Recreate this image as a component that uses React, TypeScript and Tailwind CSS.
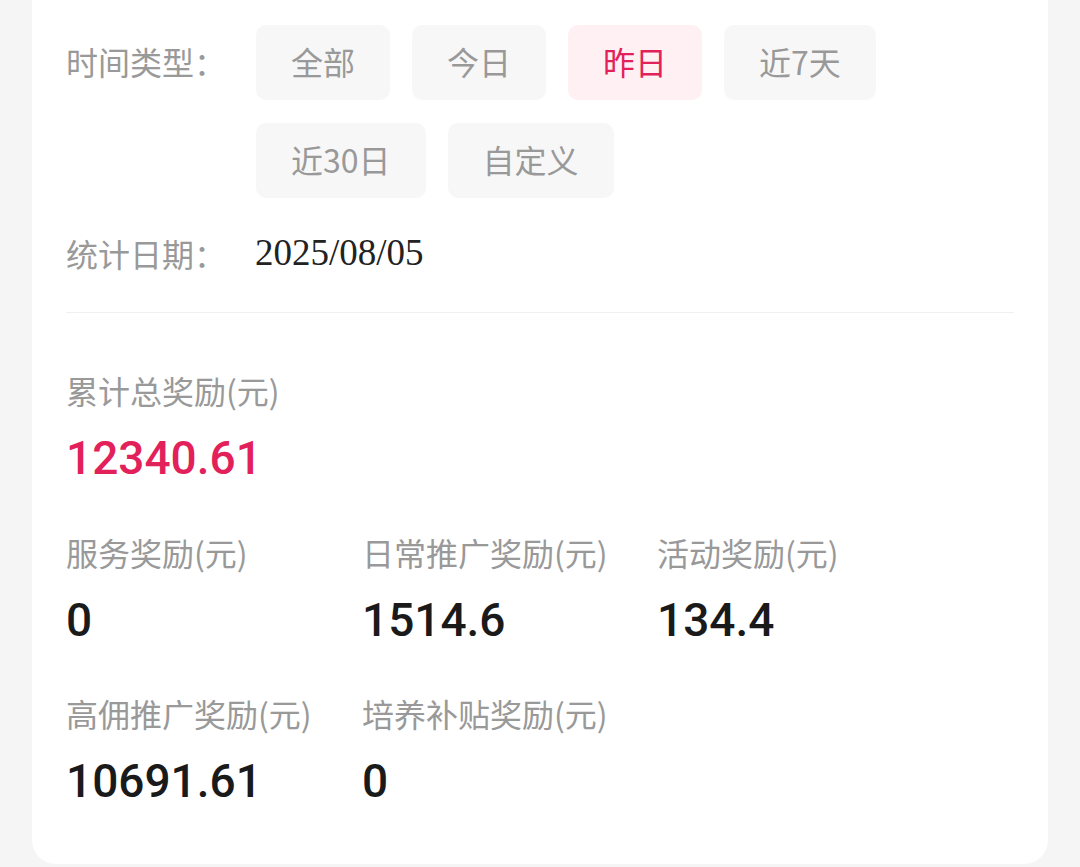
import React from "react";

const CJK = "font-['Noto_Sans_CJK_SC','Noto_Sans',sans-serif]";
const NUM = "font-['Roboto','Liberation_Sans',sans-serif]";

const TIME_TYPES = ["全部", "今日", "昨日", "近7天", "近30日", "自定义"];

const STATS = [
  { label: "服务奖励(元)", value: "0" },
  { label: "日常推广奖励(元)", value: "1514.6" },
  { label: "活动奖励(元)", value: "134.4" },
  { label: "高佣推广奖励(元)", value: "10691.61" },
  { label: "培养补贴奖励(元)", value: "0" },
];

export default function App() {
  const active = "昨日";

  return (
    <div className={`min-h-[867px] w-[1080px] bg-[#f5f5f5] ${CJK}`}>
      <div className="mx-[32px] rounded-b-[24px] bg-white px-[34px] pt-[25px] pb-[55px]">
        {/* time type filter */}
        <div className="flex">
          <div className="w-[190px] shrink-0 text-[32px] leading-[72px] text-[#999999]">时间类型：</div>
          <div className="flex flex-wrap gap-x-[22px] gap-y-[23px]">
            {TIME_TYPES.map((t) => (
              <button
                key={t}
                className={`h-[75px] rounded-[10px] px-[35px] pb-[3px] text-[32px] leading-[72px] ${
                  t === active ? "bg-[#fff0f3] text-[#e2215b]" : "bg-[#f7f7f7] text-[#999999]"
                }`}
              >
                {t}
              </button>
            ))}
          </div>
        </div>

        {/* date */}
        <div className="mt-[31px] flex h-[48px] items-center">
          <div className="w-[189px] shrink-0 text-[32px] text-[#999999]">统计日期：</div>
          <div className="font-['Liberation_Serif',serif] text-[37px] text-[#222222]">2025/08/05</div>
        </div>

        <div className="mt-[35px] h-px bg-[#f0f0f0]" />

        {/* total */}
        <div className="mt-[55px] text-[32px] leading-[44px] text-[#999999]">累计总奖励(元)</div>
        <div className={`mt-[18px] text-[46px] leading-[56px] font-medium text-[#e2215b] ${NUM}`}>12340.61</div>

        {/* breakdown */}
        <div className="mt-[44px] grid grid-cols-[296px_295px_1fr] gap-y-[43px]">
          {STATS.map((s) => (
            <div key={s.label}>
              <div className="text-[32px] leading-[44px] whitespace-nowrap text-[#999999]">{s.label}</div>
              <div className={`mt-[18px] text-[46px] leading-[56px] font-medium text-[#1a1a1a] ${NUM}`}>{s.value}</div>
            </div>
          ))}
        </div>
      </div>
    </div>
  );
}
